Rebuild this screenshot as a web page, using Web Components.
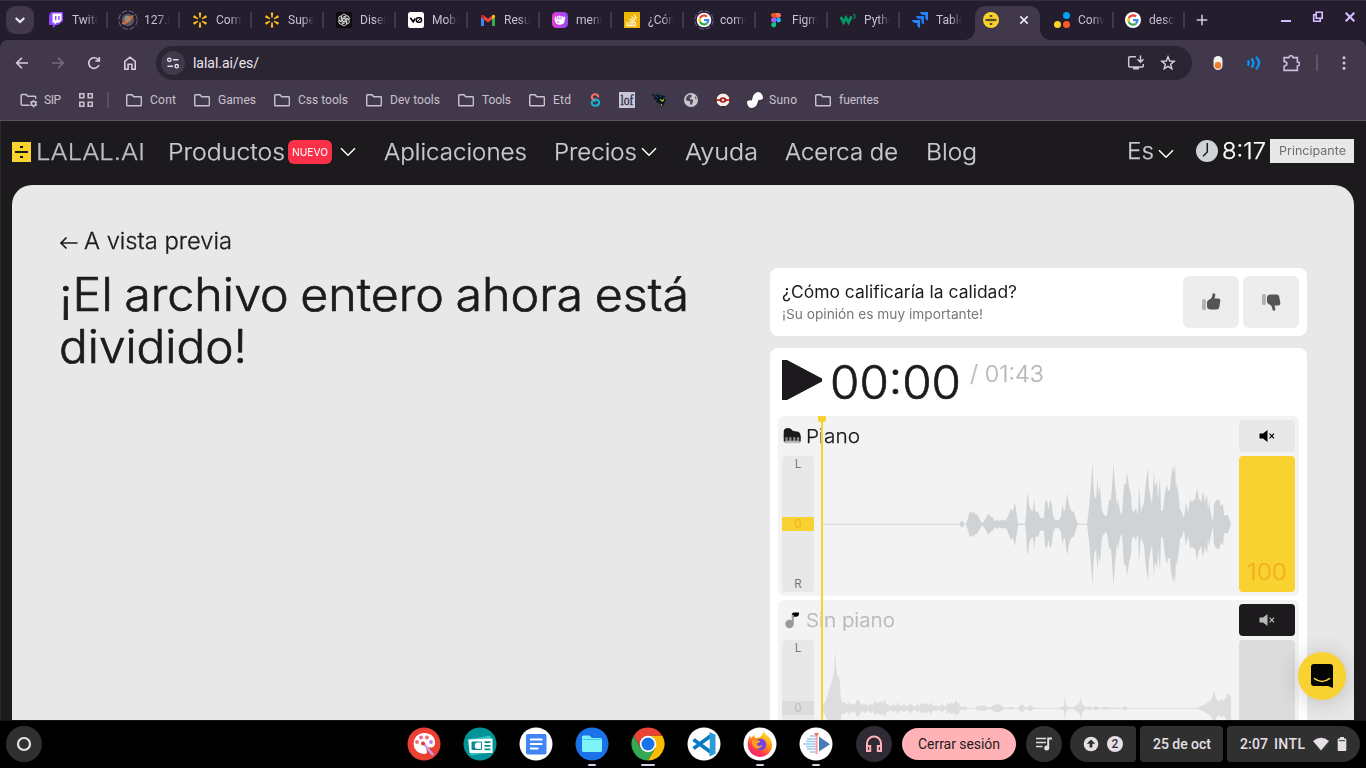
<!DOCTYPE html>
<html lang="es">
<head>
<meta charset="utf-8">
<title>LALAL.AI</title>
<style>
html,body{margin:0;padding:0;width:1366px;height:768px;overflow:hidden;background:#1c1a1d}
</style>
</head>
<body>
<desk-screen></desk-screen>
<script>
const define=(name,render)=>customElements.define(name,class extends HTMLElement{
  constructor(){super();this.attachShadow({mode:'open'});}
  connectedCallback(){if(!this.ready){this.ready=true;this.shadowRoot.innerHTML=render(this);}}
});

customElements.define('fit-text',class extends HTMLElement{
  constructor(){
    super();
    this.attachShadow({mode:'open'}).innerHTML='<style>:host{display:block;white-space:pre;flex:none}span{display:inline-block;transform-origin:0 50%}</style><span><slot></slot></span>';
  }
  connectedCallback(){
    const w=+this.getAttribute('w'),s=this.shadowRoot.querySelector('span');
    if(!w)return;
    this.style.width=w+'px';
    const n=this.textContent.length,nat=s.getBoundingClientRect().width;
    if(getComputedStyle(this).fontFamily.startsWith('Inter'))s.style.transform=`scaleX(${(w/nat).toFixed(4)})`;
    else s.style.letterSpacing=((w-nat)/Math.max(1,n-1)).toFixed(3)+'px';
  }
});

const google='<path fill="#ea4335" d="M12 4.8c1.8 0 3.300.65 4.500 1.750l3.200-3.200C17.700 1.500 15 .4 12 .4 7.500.4 3.600 3 1.700 6.750l3.800 2.900C6.400 6.850 9 4.800 12 4.800z"/><path fill="#4285f4" d="M23.200 12.200c0-.9-.1-1.600-.25-2.300H12v4.400h6.200c-.3 1.500-1.100 2.600-2.300 3.400l3.700 2.900c2.200-2 3.600-5 3.600-8.400z"/><path fill="#fbbc05" d="M5.500 14.300a7 7 0 0 1 0-4.600L1.700 6.800a11.600 11.600 0 0 0 0 10.400z"/><path fill="#34a853" d="M12 23.600c3.100 0 5.700-1 7.600-2.900l-3.700-2.900c-1 .7-2.400 1.200-3.900 1.200-3 0-5.600-2-6.500-4.700l-3.800 2.900C3.600 21 7.500 23.600 12 23.600z"/>';
const spark=[0,60,120,180,240,300].map(a=>`<path transform="rotate(${a} 12 12)" d="M10.200 1.200q1.800-1.100 3.600 0l-.9 7.300h-1.800z"/>`).join('');
const folder='<path fill="none" stroke="#c9c2cc" stroke-width="1.500" d="M1.700 2.700h4.300l1.700 2h6.700a1 1 0 0 1 1 1v7a1 1 0 0 1-1 1H1.700a1 1 0 0 1-1-1v-9a1 1 0 0 1 1-1z"/>';
const I={
 chev:[12,'<path d="M2.800 4.500 6 7.500l3.200-3" fill="none" stroke="#eee6f4" stroke-width="1.700"/>'],
 twitch:[16,'<path fill="#9146ff" d="M3 0h12v9l-5 4H8l-3 3v-3H1V3z"/><path fill="#fff" d="M4.500 1.500h9v6.800L11 10.800H8.500L6.500 12.800v-2h-2z"/><path fill="#9146ff" d="M7 4h1.400v4H7zm3.300 0h1.400v4h-1.400z"/>'],
 planet:[20,'<circle cx="10" cy="10" r="9.200" fill="none" stroke="#665780" stroke-width="1.200" stroke-dasharray="5.500 1.800"/><circle cx="10" cy="10" r="6.200" fill="#54575c"/><circle cx="9.500" cy="9" r="3.200" fill="#87919b"/><path d="M4.500 13.500c2 1.500 9-3.200 10.300-7.600-2.500 1.200-7 4-10.300 7.600z" fill="none" stroke="#e06d36" stroke-width="1.200"/>'],
 spark:[24,`<g fill="#ffc220">${spark}</g>`],
 gpt:[16,'<rect width="16" height="16" rx="2.500" fill="#0b0b0b"/><g fill="none" stroke="#e5e5e5" stroke-width=".9">'+[0,60,120,180,240,300].map(a=>`<path transform="rotate(${a} 8 8)" d="M5.500 7V4.700a2.500 2.500 0 0 1 4.600-1.300L6.700 5.600v3.200"/>`).join('')+'</g>'],
 v0:[16,'<rect width="16" height="16" rx="2.500" fill="#fff"/><path d="M2.300 5.800 5.200 9.800 7.200 6.500" fill="none" stroke="#000" stroke-width="1.700"/><rect x="8.300" y="5.700" width="5.200" height="4.600" rx="2" fill="none" stroke="#000" stroke-width="1.500"/><path d="m9 10 4-4" stroke="#000"/>'],
 gmail:[16,'<path fill="#4285f4" d="M1 4v10h3V7z"/><path fill="#34a853" d="M15 4v10h-3V7z"/><path fill="#ea4335" d="M3.200 3 8 6.800 12.800 3v4L8 10.500 3.200 7z"/><path fill="#c5221f" d="M1 4.500C1 2.500 2.600 2.400 4 3.500V7.400L1 5.200z"/><path fill="#fbbc04" d="M15 4.500c0-2-1.600-2.100-3-1v3.900l3-2.200z"/>'],
 fist:[16,'<defs><linearGradient id="f" x1="0" x2="1"><stop stop-color="#e83bd7"/><stop offset="1" stop-color="#934bf4"/></linearGradient></defs><rect width="16" height="16" rx="4.500" fill="url(#f)"/><path fill="#fff" d="M2.700 5.500q1-2 2 0 .2-3 2.100-.5.800-2.800 2.200 0 1.500-2 2 .5l1.700-1.200.6 1.700-.8 1.500c.6 3-1.200 5.200-4.500 5.200S3 11 2.700 8z"/><path d="M4.800 5v2.700m2.100-2.700v2.700m2.100-2.700v2.400M5 10h2.500" stroke="#b53fe6" stroke-width=".8"/>'],
 so:[16,'<rect width="16" height="16" fill="#efb509"/><path d="M3 10v3.800h8.300V10M4.500 12h5.300m-5-2.300 5.300.7M5.700 7.200l5 1.900M7.500 4.600l4 3.300M10.200 2.500l2.300 4.200" fill="none" stroke="#fff" stroke-width="1.100"/>'],
 google:[24,`<circle cx="12" cy="12" r="12" fill="#fff"/><g transform="translate(3 3) scale(.75)">${google}</g>`],
 googler:[30,`<circle cx="15" cy="15" r="13.800" fill="none" stroke="#665780" stroke-width="1.700" stroke-dasharray="8 3"/><circle cx="15" cy="15" r="11" fill="#fff"/><g transform="translate(6.500 6.500) scale(.71)">${google}</g>`],
 figma:[16,'<path fill="#f24e1e" d="M5.300 1H8v4.700H5.300a2.350 2.350 0 0 1 0-4.700z"/><path fill="#ff7262" d="M8 1h2.700a2.350 2.350 0 0 1 0 4.700H8z"/><path fill="#a259ff" d="M5.300 5.700H8v4.700H5.300a2.350 2.350 0 0 1 0-4.700z"/><circle cx="10.600" cy="8.050" r="2.350" fill="#1abcfe"/><path fill="#0acf83" d="M5.300 10.400H8v2.500a2.400 2.400 0 1 1-2.700-2.500z"/>'],
 w3:[16,'<path d="M.8 4.800 3.500 10.500 6 5.800 8.500 10.500 11.500 4.500" fill="none" stroke="#059862" stroke-width="2.800"/><path d="M13 2.700h2.300L14 4.200q1.800 0 1.300 1.700-.6 1-2 .5" fill="none" stroke="#059862" stroke-width=".9"/>'],
 jira:[16,'<path fill="#2684ff" d="M16 0v8.500q-3-.5-2.700-4V3H12Q8.300 3 8 0z"/><path fill="#2378ee" d="M12 4v8.500q-3-.5-2.700-4V7H8Q4.300 7 4 4z"/><path fill="#2684ff" d="M8 8v8q-3-.5-2.700-4v-1H4Q.3 11 0 8z"/>'],
 lalal:[16,'<circle cx="8" cy="8" r="8" fill="#f7d231"/><path d="M2.500 8h11M6.700 4h2.600M6.700 12h2.600" stroke="#2a2520" stroke-width="1.500"/><path d="M4.500 6.500h7M4.500 9.500h7" stroke="#9e861c" stroke-width=".4"/>'],
 dots:[16,'<circle cx="12.500" cy="3.500" r="3.500" fill="#00a6f4"/><circle cx="3.500" cy="12.500" r="3.500" fill="#ffd428"/><circle cx="12.500" cy="12.500" r="3.500" fill="#ff5a22"/>'],
 close:[12,'<path d="m2.300 2.300 7.400 7.400m0-7.400-7.400 7.400" stroke="#eae3ef" stroke-width="1.700"/>'],
 plus:[12,'<path d="M6 .7v10.600M.7 6h10.600" stroke="#d5cddd" stroke-width="1.500"/>'],
 min:[12,'<path d="M1 10h10" stroke="#d8bdff" stroke-width="2"/>'],
 rest:[12,'<path d="M4.200 1.200h6v6h-6zM4 3.700H1.700v6.600h6.500V8" fill="none" stroke="#d8bdff" stroke-width="1.600"/>'],
 winx:[12,'<path d="m1.700 1.700 8.600 8.600m0-8.600-8.600 8.600" stroke="#d8bdff" stroke-width="2.100"/>'],
 back:[16,'<path d="M14 8H3m5-5.300L2.700 8 8 13.300" fill="none" stroke="#d7cce1" stroke-width="1.600"/>'],
 fwd:[16,'<path d="M2 8h11M8 2.700 13.300 8 8 13.300" fill="none" stroke="#766b80" stroke-width="1.600"/>'],
 reload:[16,'<path d="M13 10a5.300 5.300 0 1 1-1-5.500L13 5.500M13.300 2v4H9.400" fill="none" stroke="#d7cce1" stroke-width="1.600"/>'],
 home:[16,'<path d="M2.800 6.400 8 2.200l5.200 4.200v7.900H9.900V9.300H6.100v5H2.800z" fill="none" stroke="#d7cce1" stroke-width="1.600"/>'],
 tune:[16,'<circle cx="4.300" cy="4.800" r="1.700" fill="none" stroke="#e6deea" stroke-width="1.400"/><circle cx="11.700" cy="11.200" r="1.700" fill="none" stroke="#e6deea" stroke-width="1.400"/><path d="M8 4.800h5.500M2.500 11.200H8" stroke="#e6deea" stroke-width="1.500"/>'],
 install:[18,'<path d="M9 2.700H2.700a1 1 0 0 0-1 1v8.200a1 1 0 0 0 1 1h12.600a1 1 0 0 0 1-1v-1.800M13.500 1.500V8m-3-2.700 3 3 3-3" fill="none" stroke="#cfc8d2" stroke-width="1.500"/><path fill="#cfc8d2" d="M6 13h6v2.500H6z"/>'],
 star:[16,'<path d="m8 1.800 1.700 4.200 4.500.3-3.500 2.900 1.100 4.500L8 11.300l-3.800 2.400 1.100-4.500-3.500-2.900 4.500-.3z" fill="none" stroke="#d8d0dc" stroke-width="1.400"/>'],
 pill:[16,'<rect x="3.500" y="1" width="9" height="14" rx="4.500" fill="#f3f0ea"/><circle cx="8" cy="10.400" r="3.300" fill="#f17b2c"/>'],
 waves:[16,'<path d="M1.700 5.500q2 2.500 0 5M5.500 3.500q3.800 4.500 0 9M10 1.800q6 6.200 0 12.400" fill="none" stroke="#0793f7" stroke-width="2.300"/>'],
 puzzle:[16,'<path d="M1 2.500h4.600q.1-1.800 1.900-1.800t1.900 1.800h4.100v4q2 0 2 1.900t-2 1.900v4.200H1V10.600q2.700-.5 2.700-2.300T1 6z" fill="none" stroke="#cdbce0" stroke-width="1.500"/>'],
 more:[16,'<g fill="#d2c5df"><circle cx="8" cy="2.800" r="1.500"/><circle cx="8" cy="8" r="1.500"/><circle cx="8" cy="13.200" r="1.500"/></g>'],
 folder:[16,folder],
 foldergear:[18,'<path fill="none" stroke="#c9c2cc" stroke-width="1.500" d="M9.500 14.300H2.200a1 1 0 0 1-1-1V4.500a1 1 0 0 1 1-1h4L7.800 5.300h6.900a1 1 0 0 1 1 1v1.400"/><circle cx="13.600" cy="12.600" r="2.200" fill="none" stroke="#c9c2cc" stroke-width="1.500"/><path d="M13.600 8.800v1.500m0 4.600v1.500M10.300 10.700l1.300.7m4 2.300 1.300.8m0-3.800-1.300.7m-4 2.300-1.300.8" stroke="#c9c2cc" stroke-width="1.400"/>'],
 apps:[14,'<path d="M.8 .8h4v4h-4zm8.400 0h4v4h-4zM.8 9.200h4v4h-4zm8.400 0h4v4h-4z" fill="none" stroke="#c9c2cc" stroke-width="1.600"/>'],
 s8:[16,'<path d="M11.300 5.500c.5-4.500-6.800-4.300-6.500 0 .2 1.500 1.700 2.200 3.500 2.500" fill="none" stroke="#f5706c" stroke-width="2"/><path d="M8 7.300c3.500.4 4.300 1.700 4.100 3.500-.4 3.900-7.500 3.900-7.400-.1.2-2 2.300-2.400 4-1.700" fill="none" stroke="#16b4d8" stroke-width="2"/>'],
 lof:[16,'<rect width="16" height="16" fill="#c8c9dc"/><text x="8" y="13" text-anchor="middle" font-family="Liberation Serif" font-size="14" textLength="13" lengthAdjust="spacingAndGlyphs" fill="#292936" stroke="#292936" stroke-width=".3">lof</text>'],
 bat:[16,'<path fill="#081421" d="M0 2 6 3l1-2 2 2 6 1-3 2 3 1-2 5-2 3-3-4-3-1 1-2-4-1 2-1z"/><path d="m9 7.500 2.500 1.500 1.500-1.500m-3 4.500 1 1.500" fill="none" stroke="#a1e22c" stroke-width="1.100"/><path d="m3 3 4 3m0-4 3 3" stroke="#17507f"/>'],
 globe:[16,'<circle cx="8" cy="8" r="7" fill="#c5c8ca"/><path d="M7.500 2.500 9 4 6.500 7l3.500.7v2L8.500 13 7 12l.3-2.500L3 8.200V6l2-2.700zM12 4l2 3-2-.5z" fill="#50475b"/>'],
 poke:[16,'<circle cx="8" cy="8" r="7" fill="#f3eee6" stroke="#25190f" stroke-width=".8"/><path fill="#b31315" d="M1 7.300h14v1.600H1z"/><ellipse cx="8" cy="8" rx="3.300" ry="2.700" fill="#b31315"/><circle cx="8" cy="8" r="1.500" fill="#fff" stroke="#50100a" stroke-width=".5"/><path d="M5 14 8 15l3-1z" fill="#271a11"/>'],
 suno:[16,'<path fill="#fff" d="M11 0q4.500 0 5 6.500-1.500 1.700-4.200 1.300C10.500 8 11 16 4.500 16 1 15.500 0 12 0 9.500q2.500-1.700 4.800-1C5.700 8 5 1 11 0z"/>'],
 launch:[16,'<circle cx="8" cy="8" r="6" fill="none" stroke="#e8e3e9" stroke-width="2.200"/>'],
 paint:[34,'<circle cx="17" cy="17" r="16.500" fill="#eb4034"/><path fill="#fff" d="M17 6c7.500 0 11.500 4.500 11 10.500-.3 4-3.800 4.500-6.500 3.800-2.500 0-2.700 1.700-1.700 3.500.8 1.800 0 3.200-2.800 3.200A10.500 10.500 0 1 1 17 6z"/><g fill="#f16b7a"><circle cx="10" cy="15" r="1.900"/><circle cx="14" cy="10.500" r="1.900"/><circle cx="20" cy="10.500" r="1.900"/></g><circle cx="24" cy="15" r="1.900" fill="#b47cf0"/><path d="m17 17 9 11" stroke="#c5a1f6" stroke-width="2.300"/><circle cx="16" cy="16.500" r="2" fill="#e8392f"/>'],
 news:[34,'<circle cx="17" cy="17" r="16.500" fill="#009397"/><path fill="#35c3c8" d="m4.500 12.500 23-4v17l-20 3z"/><path fill="#fff" d="m5.500 12.500 24-1v14.500h-23z"/><rect x="8.500" y="14.500" width="10.500" height="8.500" rx="1" fill="#078d90"/><path d="M15 15.500h3v6.500h-3a3.250 3.250 0 0 1 0-6.500z" fill="#fff"/><path d="M21.500 15.200h6M21.500 18.800h6M21.500 22.400h6" stroke="#078d90" stroke-width="1.700"/>'],
 docs:[34,'<circle cx="17" cy="17" r="16.500" fill="#fff"/><rect x="7" y="7" width="20.500" height="20.500" rx="2" fill="#4285f4"/><path d="M11 12.500h12.500M11 17h12.500M11 21.500h8.500" stroke="#fff" stroke-width="2"/>'],
 files:[34,'<circle cx="17" cy="17" r="16.500" fill="#1a73e8"/><path fill="#7cf4fa" d="M7 10a1.500 1.500 0 0 1 1.500-1.500h6l2.500 2.500h8.500A1.500 1.500 0 0 1 27 12.500v11a1.500 1.500 0 0 1-1.500 1.500h-17A1.500 1.500 0 0 1 7 23.500z"/><path d="M8 12.500h18" stroke="#39b9ed" stroke-width=".8"/>'],
 chrome:[34,'<path fill="#ea4335" d="M2.700 8.750A16.500 16.500 0 0 1 31.300 8.750H17l-7 12.500z"/><path fill="#34a853" d="M2.700 8.750A16.500 16.500 0 0 0 17 33.500l7.200-12.300H9.800z"/><path fill="#fbbc04" d="M31.300 8.750A16.500 16.500 0 0 1 17 33.500l7.200-12.300L17 8.750z"/><circle cx="17" cy="17" r="8.200" fill="#fff"/><circle cx="17" cy="17" r="6.500" fill="#1a73e8"/>'],
 vs:[34,'<circle cx="17" cy="17" r="16.500" fill="#fff"/><path d="m6.500 12.500 17 12.500M6.500 21.500 23.500 9" stroke="#087bc0" stroke-width="3.600"/><path fill="#289bda" d="m22.500 5 6 2.700v19l-6 2.700z"/><path fill="#fff" d="m17.500 17 5-4v8z"/>'],
 fire:[34,'<defs><linearGradient id="r" x1=".8" y1="0" x2=".2" y2="1"><stop stop-color="#fff044"/><stop offset=".4" stop-color="#ff980e"/><stop offset=".75" stop-color="#ff3651"/><stop offset="1" stop-color="#e32180"/></linearGradient></defs><circle cx="17" cy="17" r="16.500" fill="#fff"/><path fill="url(#r)" d="M21 4c1 3 3 4 5 6 3 3 4 8 2.500 12A12.300 12.300 0 0 1 4.700 18C4.500 13.500 6 11 7 8.500l1 3 3-3.500 1 3 4-.5c1.500 0 3.500-3 5-6.500z"/><circle cx="17.500" cy="17.500" r="5.800" fill="#7542e5"/><path fill="#ff9d24" d="m9 13 7 .5c2 .5 1 2-1 2.500-2 .6-1 3 1.500 3l3-1c-1 3-5 5-8 2.500-2-1.700-3-4-2.500-7.500z"/>'],
 cut:[34,'<circle cx="17" cy="17" r="16.500" fill="#fff"/><path d="M4 17h12M7 14.500h9m-9 5h9m-8-7.500h8m-8 10h8m-5-13h5m-5 16h5" stroke="#9fc5f0" stroke-width="1.500"/><path fill="#4b79b5" d="m20 9.500 11 7.700-11 7.300z"/><path d="M17.500 7v20" stroke="#f5a09a" stroke-width="2.200"/><path fill="#ed6c63" d="M15 6h5l-2 3h-1z"/>'],
 head:[20,'<path d="M3 16V9.500a7 7 0 0 1 14 0V16" fill="none" stroke="#ffb3b9" stroke-width="2"/><path d="M3 12h3.200v5H3zm10.800 0H17v5h-3.200z" fill="none" stroke="#ffb3b9" stroke-width="2"/>'],
 list:[20,'<path d="M2 4.500h10M2 8.500h10M2 12.500h6.500" stroke="#e5dfe6" stroke-width="1.700"/><path d="M14.200 14V4.500H18" fill="none" stroke="#e5dfe6" stroke-width="2"/><circle cx="12.700" cy="14" r="2.500" fill="#e5dfe6"/>'],
 up:[16,'<circle cx="8" cy="8" r="7.300" fill="#e6e0e6"/><path fill="#303030" d="m8 3.500 4.300 4.300H9.400v3.700H6.600V7.800H3.700z"/>'],
 wifi:[16,'<path fill="#e6e0e6" d="M0 5q8-6.500 16 0L8 14.500z"/>'],
 batt:[16,'<path fill="#e6e0e6" d="M6 1h4v1.500h1.300a1 1 0 0 1 1 1V14a1 1 0 0 1-1 1H4.700a1 1 0 0 1-1-1V3.500a1 1 0 0 1 1-1H6z"/><path d="M5 4.700h6" stroke="#303030"/>'],
 logo:[20,'<path fill="#f7d231" d="M0 0h19v20H0z"/><path fill="#1c1a1d" d="M3 9h13v2H3zM8 4h3v2H8zm0 10h3v2H8z"/>'],
 navchev:[16,'<path d="m1 4.300 7 7 7-7" fill="none" stroke="#fff" stroke-width="1.500"/>'],
 clock:[22,'<circle cx="11" cy="11" r="11" fill="#cfd3d6"/><path d="M11.300 3v9L7 16.200" fill="none" stroke="#1c1a1d" stroke-width="1.500"/>'],
 arrow:[18,'<path d="M1 9h16.500M6.500 3.500 1 9l5.500 5.500" fill="none" stroke="#1c1a1d" stroke-width="1.700"/>'],
 thumb:[20,'<rect x="1" y="7" width="4" height="11" rx="1.500" fill="#b3b3b3"/><path fill="#555557" d="M6 10.500q0-1.500 1.200-2.300L10 6.500q1-1 1.300-3l.3-1.500c.4-1.300 2.500-1 2.700.6q.1 1.700-.9 4h3.900c1.600 0 2.200 1.200 2 2.400l-1 6c-.3 1.700-1.300 2.500-3 2.500H10c-2.500 0-4-1-4-3z"/>'],
 play:[40,'<path fill="#1c1a1d" d="M0 0h5l35 18.500v3L5 40H0z"/>'],
 piano:[18,'<path d="M1.500 15.500h15.500" stroke="#bbb" stroke-width="1.500"/><path fill="#8b8b8b" d="M1 9h16.500v5.500H1z"/><path fill="#1c1a1d" d="M.7 4.500C.7.2 7.500 0 9 3c1 1.800 5 .8 7 2.300 1.500 1 1.600 3 1.600 5H.7z"/><path d="M1.500 9v5.500M5.400 9v4.500M9.300 9v4.500M13.200 9v4.500M16.900 9v5.500" stroke="#1c1a1d" stroke-width="1.500"/>'],
 note:[18,'<circle cx="6.500" cy="13" r="4.200" fill="#999"/><path d="M9.700 13V2.500" stroke="#999" stroke-width="2"/><path fill="#000" d="M9 3.500q0-2 2-2h5v1.300q0 3-3.200 3H10.700V4z"/>'],
 mute:[16,'<path fill="currentColor" d="M.5 5.500H4L8.500 2v12L4 10.500H.5z"/><path d="m10.500 5.700 4.500 4.600m0-4.600-4.500 4.600" stroke="currentColor" stroke-width="1.200"/>'],
 chat:[24,'<path fill="#050505" d="M4 0h16a3 3 0 0 1 3 3v21l-5-2H4a3 3 0 0 1-3-3V3a3 3 0 0 1 3-3z"/><path d="M4.500 14.700q7.500 5.500 15 0" fill="none" stroke="#f7d231" stroke-width="1.600" stroke-linecap="round"/>']
};
define('ui-icon',e=>{
  const [v,p]=I[e.getAttribute('name')],s=e.getAttribute('s')||v;
  return `<style>:host{display:block;width:${s}px;height:${s}px;flex:none}svg{display:block}</style><svg width="${s}" height="${s}" viewBox="0 0 ${v} ${v}">${p}</svg>`;
});
const ic=(n,s)=>`<ui-icon name="${n}"${s?` s="${s}"`:''}></ui-icon>`;

define('browser-tab',e=>{
  const n=e.getAttribute('icon'),big=n==='planet'||n==='googler';
  return `<style>:host{display:flex;align-items:center;width:72px;height:40px;flex:none;font:12px Roboto,sans-serif;color:#c9c0d4;box-sizing:border-box}
  .i{width:20px;display:flex;justify-content:center;margin-right:6px}
  .t{width:26px;overflow:hidden;white-space:nowrap;-webkit-mask:linear-gradient(90deg,#000 55%,transparent)}
  .s{width:2px;height:16px;margin-left:8px;background:${e.hasAttribute('nosep')?'none':'#40384d'}}</style>
  <div class="i">${ic(n,big?20:16)}</div><div class="t"><slot></slot></div><div class="s"></div>`;
});
define('active-tab',()=>`<style>:host{display:flex;align-items:center;width:65px;height:34px;margin-top:6px;background:#41384c;border-radius:10px 10px 0 0;box-sizing:border-box;padding:0 0 6px 8px;position:relative;flex:none}
  .l,.r{position:absolute;bottom:0;width:10px;height:10px}
  .l{left:-10px;background:radial-gradient(circle at 0 0,transparent 9.500px,#41384c 10px)}
  .r{right:-10px;background:radial-gradient(circle at 100% 0,transparent 9.500px,#41384c 10px)}
  ui-icon+ui-icon{margin-left:19px}</style>${ic('lalal',16)}${ic('close',12)}<i class="l"></i><i class="r"></i>`);

define('tab-strip',()=>{
  const t=[['twitch','Twitch'],['planet','127.0.0.1'],['spark','Como'],['spark','Super'],['gpt','Diseño'],['v0','Mobile'],['gmail','Resum'],['fist','menú'],['so','¿Cómo'],['googler','como'],['figma','Figma'],['w3','Python'],['jira','Tablero']];
  return `<style>:host{display:flex;height:40px;background:#241d2e;box-shadow:inset 0 1px #352d40;align-items:flex-start}
  .m{width:28px;height:28px;border-radius:9px;background:#41384c;margin:6px 12px 0 6px;display:grid;place-items:center;flex:none}
  active-tab{margin-left:-7px;margin-right:12px}
  .p{margin:14px 0 0 2px}.w{display:flex;gap:20px;margin:11px 10px 0 auto;align-items:center}</style>
  <div class="m">${ic('chev',16)}</div>${t.map(([i,s],k)=>`<browser-tab icon="${i}"${k==12?' nosep':''}>${s}</browser-tab>`).join('')}
  <active-tab></active-tab><browser-tab icon="dots" style="width:71px">Conv</browser-tab><browser-tab icon="google" style="width:71px">desc</browser-tab><div class="p">${ic('plus',12)}</div>
  <div class="w">${ic('min',12)}${ic('rest',12)}${ic('winx',12)}</div>`;
});
define('tool-bar',()=>`<style>:host{display:flex;align-items:center;height:46px;background:#41384c;padding:0 14px;color:#ebe4ef;font:14px Roboto,sans-serif}
  .n{display:flex;gap:20px;width:142px;flex:none}.o{width:1036px;height:34px;border-radius:17px;background:#2b2433;display:flex;align-items:center;box-sizing:border-box;padding:0 16px 0 5px;flex:none}
  .c{width:24px;height:24px;border-radius:50%;background:#41384c;display:grid;place-items:center;margin-right:8px;flex:none}
  .g{display:flex;align-items:center;gap:15px;margin-left:auto}
  .e{display:flex;gap:20px;margin-left:18px;align-items:center}.s{width:2px;height:16px;background:#5f566b;margin-left:-2px}</style>
  <div class="n">${ic('back',16)}${ic('fwd',16)}${ic('reload',16)}${ic('home',16)}</div>
  <div class="o"><div class="c">${ic('tune',16)}</div><fit-text w="66">lalal.ai/es/</fit-text><div class="g">${ic('install',18)}${ic('star',16)}</div></div>
  <div class="e">${ic('pill',16)}${ic('waves',16)}<span style="margin-left:1px">${ic('puzzle',17)}</span><i class="s" style="margin-left:-4px"></i><span style="margin-left:-2px">${ic('more',16)}</span></div>`);
define('bookmark-bar',()=>{
  const f=(t,w)=>`<a>${ic('folder',16)}<fit-text w="${w}">${t}</fit-text></a>`;
  return `<style>:host{display:flex;height:36px;background:#41384c;border-bottom:1px solid #5b5364;box-sizing:border-box;padding:0 0 7px 20px;align-items:center;font:12px Roboto,sans-serif;color:#c9c2cc}
  a{display:flex;align-items:center;gap:8px;margin-right:18px}.s{width:2px;height:16px;background:#594f65;margin:0 17px 0 14px}.q{display:flex;gap:16px;margin:0 16px 0 -2px}</style>
  <a style="gap:6px">${ic('foldergear',18)}<fit-text w="17">SIP</fit-text></a>${ic('apps',14)}<i class="s"></i>
  ${f('Cont',26)}${f('Games',38)}${f('Css tools',50)}${f('Dev tools',50)}${f('Tools',29)}${f('Etd',18)}
  <div class="q">${['s8','lof','bat','globe','poke'].map(n=>ic(n,16)).join('')}</div>
  <a style="gap:6px">${ic('suno',16)}<fit-text w="28">Suno</fit-text></a>${f('fuentes',40)}`;
});

define('site-header',()=>`<style>:host{display:flex;height:60px;align-items:center;padding:0 12px;font:300 23px Inter,sans-serif;color:#c8ccce;box-sizing:border-box;-webkit-text-stroke:.25px}
  fit-text{margin-right:28px}
  .b{background:#fa3048;color:#fff;font-size:11px;font-weight:400;border-radius:6px;width:44px;height:24px;display:grid;place-items:center;margin:0 8px 0 4px;flex:none;-webkit-text-stroke:0}
  .b fit-text,.k fit-text{margin:0}
  .k{background:#e8e8e8;color:#707070;font-size:11.500px;font-weight:400;width:84px;height:24px;display:grid;place-items:center;position:relative;top:-1px;-webkit-text-stroke:0}
  .u{position:relative;top:-1px}</style>
  ${ic('logo',20)}<fit-text w="109" style="margin:0 23px 0 4px;color:#b9bdbf">LALAL.AI</fit-text>
  <fit-text w="117" style="margin:0 -1px 0 0">Productos</fit-text><div class="b"><fit-text w="36">NUEVO</fit-text></div>${ic('navchev',16)}
  <fit-text w="143" style="margin:0 27px 0 28px">Aplicaciones</fit-text><fit-text w="83" style="margin:0 4px 0 0">Precios</fit-text>${ic('navchev',16)}
  <fit-text w="73" style="margin-left:28px;margin-right:27px">Ayuda</fit-text><fit-text w="113" style="margin-right:28px">Acerca de</fit-text><fit-text w="51">Blog</fit-text>
  <fit-text class="u" w="27" style="margin:0 4px 0 auto">Es</fit-text><span style="margin:4px 22px 0 0">${ic('navchev',16)}</span>
  <span class="u">${ic('clock',22)}</span><fit-text class="u" w="44" style="margin:0 4px 0 4px;color:#fff">8:17</fit-text><div class="k"><fit-text w="67">Principante</fit-text></div>`);

define('rating-card',()=>`<style>:host{display:flex;background:#fff;border-radius:8px;height:68px;box-sizing:border-box;padding:8px 8px 8px 12px;gap:4px;font-family:Inter,sans-serif;font-weight:400;-webkit-text-stroke:0}
  .t{flex:1;padding-top:5px}.a{font-size:17px;line-height:22px;color:#1c1a1d}.b{font-size:13px;line-height:22px;color:#777}
  .k{width:56px;height:52px;border-radius:6px;background:#ededed;display:grid;place-items:center}.d ui-icon{transform:scaleY(-1)}</style>
  <div class="t"><fit-text class="a" w="235">¿Cómo calificaría la calidad?</fit-text><fit-text class="b" w="201">¡Su opinión es muy importante!</fit-text></div>
  <div class="k">${ic('thumb',20)}</div><div class="k d">${ic('thumb',20)}</div>`);

/* Half-amplitudes: pairs of x offset and height, in pixels, mirrored about the middle line */
const W={
 piano:[0,.5,138,.5,139,3,141,3,142,.5,144,.5,146,6,147.500,13,150,11,151.500,13,153,10,155,10,157,6,160,1,162,3,165,8,166.500,11,168,8,171,6.500,172,3.500,174,3.500,175,5,177,3,179,4,184,4,186,8,189,16,190.500,13,192,17,193,22,195,8,196,1,203,.5,204,8,205,27,206,31,207,20,209,14,211,13,212,26,213,15,214,12,216,13,218,7,220,6,222,7,223,22,225,24,226.500,15,228,24,229.500,22,231,9,233,4,237,4,239,8,240.500,20,242,13,243,15,245,31,247,20,249,14,252,12,254,5,255,2,256,.5,265,.5,267,16,269,40,270.500,61,272,30,274,25,275.500,46,276.500,30,278,39,280,13,283,8,285,9,287,24,289,25,290,38,291.500,61,293,40,295,18,296,25,298,13,300,9,302,40,304,41,305,52,307,38,309,30,310,14,312,12,314,17,315,12,316,10,317,39,319,12,320,16,322,22,324,43,326,57,327,36,329,25,330,20,332,53,333,37,335,44,336,25,338,48,339,13,341,14,343,32,345,40,346,34,348,34,349,48,351,58,352,51,353,61,354,35,355,42,357,25,358,15,360,12,362,6,364,22,366,12,367,16,368,25,370,22,372,25,373,24,375,36,377,26,379,22,381,33,383,22,385,30,386,14,387,23,389,10,391,3,392,20,394,24,397,25,399,18,401,21,402,9,406,9,408,3,409,0],
 rest:[0,4,3,6,5,11,7,18,9,25,10,28,12,36,13,58,14,44,15,33,17,31,18,24,19,8,21,5,23,6,25,3,27,7,28,3,31,5,33,3,34,7,36,9,38,6,40,3,43,5,46,2,48,5,51,3,53,8,55,4,57,6,59,7,61,5,63,10,64,4,66,4,68,2,72,4,74,2,76,6,78,2,82,4,85,2,89,5,91,2,94,2,95,5,97,2,100,5,103,4,105,5,107,3,109,6,111,2,114,3,117,1.500,120,4,122,2,124,1,125,6,127,4,130,6,132,4,134,9,135,6,137,5,138,2,141,1,143,2,145,.5,153,.5,155,2,160,2.500,162,3,166,1,168,.5,171,3,174,4,178,4,181,1,184,.5,190,1.500,192,.5,196,.5,198,3,201,4,203,1,206,1,208,3.500,211,1,214,.5,237,.5,242,2,243,13,244,4,246,1,252,1,254,3,256,4,258,6,259,12,260,5,262,2,265,1,268,2,270,.5,274,2,279,.5,282,1.500,290,.7,301,.5,303,3,305,.5,376,.5,379,2,383,4,386,6,388,7,390,10,392,18,394,10,397,6,398,9,402,8,404,11,405,14,407,14,409,12,409,0]
};
define('wave-form',e=>{
  const a=W[e.getAttribute('kind')];let p='';
  for(let i=0;i<a.length;i+=2)p+=`${a[i]},${68.3-a[i+1]} `;
  for(let i=a.length-2;i>=0;i-=2)p+=`${a[i]},${68.3+a[i+1]} `;
  return `<style>:host{display:block;width:409px;height:136px}svg{display:block}</style><svg width="409" height="136"><polygon fill="${e.getAttribute('fill')}" points="${p}"/></svg>`;
});
define('stem-track',e=>{
  const on=e.hasAttribute('on');
  return `<style>:host{display:grid;grid-template:32px 136px / 32px 409px 56px;gap:4px 8px;background:#f3f3f3;border-radius:6px;padding:4px;height:180px;box-sizing:border-box;font-family:Inter,sans-serif}
  .h{grid-column:1/3;display:flex;align-items:center;gap:6px;font-size:19px;color:${on?'#1c1a1d':'#b9b9b9'};font-weight:300}
  .h ui-icon{margin-left:1px;margin-right:-1px}
  .m{border-radius:4px;background:${on?'#e8e8e8':'#1c1a1d'};color:${on?'#000':'#b9b9b9'};display:grid;place-items:center}
  .p{border-radius:4px;background:#e8e8e8;display:flex;flex-direction:column;align-items:center;justify-content:space-between;font-size:11.500px;line-height:16px;color:#777;font-weight:400;-webkit-text-stroke:0}
  .p span{height:16px}
  .p b{font-weight:400;width:32px;text-align:center;background:${on?'#f7d231':'#dcdcdc'};color:${on?'#f5b01c':'#bdbdbd'};line-height:14px;height:14px}
  .v{border-radius:4px;background:${on?'#f7d231':'#dcdcdc'};display:flex;align-items:flex-end;justify-content:center;font-size:23px;font-weight:300;color:#f5ae1a;line-height:40px}</style>
  <div class="h">${ic(on?'piano':'note',18)}<fit-text w="${e.getAttribute('w')}">${e.getAttribute('label')}</fit-text></div><div class="m">${ic('mute',16)}</div>
  <div class="p"><span>L</span><b>0</b><span>${on?'R':''}</span></div><wave-form kind="${on?'piano':'rest'}" fill="${on?'#cfd3d6':'#dddddd'}"></wave-form><div class="v">${on?'<fit-text w="40">100</fit-text>':''}</div>`;
});
define('stem-player',()=>`<style>:host{display:block;position:relative;background:#fff;border-radius:8px;padding:12px 8px;box-sizing:border-box;height:450px;font-family:Inter,sans-serif;font-weight:300;-webkit-text-stroke:.25px}
  .h{display:flex;height:56px;padding-left:4px;align-items:flex-start}
  .b{font-size:46px;line-height:44px;color:#1c1a1d;margin:0 9px 0 8px;-webkit-text-stroke:.7px}.s{font-size:23px;line-height:28px;color:#b9b9b9}
  stem-track+stem-track{margin-top:4px}
  .x{position:absolute;left:51px;top:68px;width:2px;bottom:0;background:#f7d231}.x:before{content:"";position:absolute;left:-3px;top:0;width:8px;height:6px;background:#f7d231;border-radius:0 0 2px 2px}</style>
  <div class="h">${ic('play',40)}<fit-text class="b" w="131">00:00</fit-text><fit-text class="s" w="74">/ 01:43</fit-text></div>
  <stem-track on w="54" label="Piano"></stem-track><stem-track w="89" label="Sin piano"></stem-track><i class="x"></i>`);

define('site-page',()=>`<style>:host{display:block;height:599px;background:#1c1a1d;overflow:hidden;position:relative;box-sizing:border-box;border-left:1px solid #29272c;padding-top:1px}
  site-header{margin-left:-1px}
  main{margin:3px 12px 0 11px;background:#e8e8e8;border-radius:20px 20px 0 0;height:560px;display:grid;grid-template-columns:662px 537px;column-gap:48px;padding-left:48px;font:300 46px Inter,sans-serif;color:#1c1a1d}
  .k{display:flex;align-items:center;gap:6px;font-size:23px;height:28px;margin:42px 0 13px;-webkit-text-stroke:.3px}.k ui-icon{margin-top:3px}
  .h{-webkit-text-stroke:.7px;word-spacing:-2px}
  .h fit-text{line-height:52px;margin-left:-1px}
  .r{padding-top:83px}stem-player{margin-top:12px}
  .c{position:absolute;right:20px;bottom:20px;width:48px;height:48px;border-radius:50%;background:#f7d231;display:grid;place-items:center;box-shadow:0 2px 24px #0003}</style>
  <site-header></site-header><main><section><div class="k">${ic('arrow',18)}<fit-text w="148">A vista previa</fit-text></div><div class="h"><fit-text w="630">¡El archivo entero ahora está</fit-text><fit-text w="188">dividido!</fit-text></div></section>
  <section class="r"><rating-card></rating-card><stem-player></stem-player></section></main><div class="c">${ic('chat',24)}</div>`);

define('shelf-bar',()=>{
  const a=['paint','news','docs','files','chrome','vs','fire','cut'],d={3:8,4:14,6:8,7:8};
  return `<style>:host{display:flex;height:48px;background:#000;align-items:center;box-shadow:inset 0 1px #151515;padding:0 6px;box-sizing:border-box;font:500 14px Roboto,sans-serif;color:#e6e0e6}
  .o{width:36px;height:36px;border-radius:50%;background:#303030;display:grid;place-items:center;flex:none}
  .a{display:flex;margin-left:354px}.a div{width:56px;height:48px;display:flex;flex-direction:column;align-items:center;box-sizing:border-box;padding-top:7px}
  .a i{height:2px;border-radius:1px;background:#d9cfe6;margin-top:3px}
  .p{width:114px;height:32px;border-radius:16px;background:#ffb3b7;color:#28191b;display:grid;place-items:center;margin:0 10px;flex:none;font-weight:400}
  .t{height:36px;background:#303030;border-radius:4px;display:flex;align-items:center;justify-content:center;margin-left:4px;flex:none;box-sizing:border-box}
  .n{width:16px;height:16px;border-radius:50%;background:#e6e0e6;color:#303030;font-size:12px;line-height:16px;text-align:center}</style>
  <div class="o">${ic('launch',16)}</div><div class="a">${a.map((n,k)=>`<div>${ic(n,34)}${d[k]?`<i style="width:${d[k]}px"></i>`:''}</div>`).join('')}</div>
  <div class="o" style="margin-left:12px;background:#2f2a34">${ic('head',20)}</div><div class="p"><fit-text w="82">Cerrar sesión</fit-text></div><div class="o">${ic('list',20)}</div>
  <div class="t" style="width:66px;border-radius:18px 4px 4px 18px;margin-left:8px;gap:8px">${ic('up',16)}<span class="n">2</span></div>
  <div class="t" style="width:83px;padding-left:1px"><fit-text w="58">25 de oct</fit-text></div>
  <div class="t" style="width:133px;border-radius:4px 18px 18px 4px;justify-content:flex-start;padding-left:13px"><fit-text w="28">2:07</fit-text><fit-text w="31" style="margin:0 8px 0 6px">INTL</fit-text>${ic('wifi',16)}<span style="margin-left:5px">${ic('batt',16)}</span></div>`;
});
define('desk-screen',()=>`<style>:host{display:flex;flex-direction:column;width:1366px;height:768px;overflow:hidden}
  site-page{flex:none}.b{background:#241d2e}tool-bar{border-radius:8px 8px 0 0}</style>
  <tab-strip></tab-strip><div class="b"><tool-bar></tool-bar></div><bookmark-bar></bookmark-bar><site-page></site-page><shelf-bar></shelf-bar>`);
</script>
</body>
</html>
